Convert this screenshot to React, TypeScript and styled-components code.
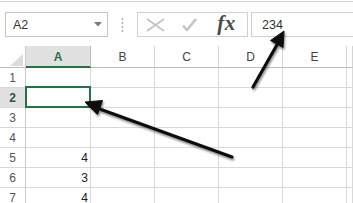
import React from "react";
import styled, { createGlobalStyle } from "styled-components";

const Global = createGlobalStyle`
  html, body { margin: 0; padding: 0; background: #fff; }
  body { width: 353px; height: 203px; overflow: hidden; font-family: "Liberation Sans", Arial, sans-serif; }
  * { box-sizing: border-box; }
`;

const Page = styled.div`
  position: relative;
  width: 353px;
  height: 203px;
  overflow: hidden;
  background: #fff;
`;

const FormulaBar = styled.div`
  display: flex;
  align-items: flex-start;
  margin-top: 1px;
  border-top: 1px solid #d6d6d6;
  padding: 10px 0 8px 5px;
  height: 45px;
`;

const NameBox = styled.div`
  position: relative;
  width: 103px;
  height: 25px;
  border: 1px solid #c6c6c6;
  display: flex;
  align-items: center;
  padding-left: 7px;
  font-size: 12.5px;
  color: #333;
  flex-shrink: 0;
`;

const Caret = styled.svg`
  position: absolute;
  right: 5px;
  top: 9px;
`;

const Grip = styled.svg`
  margin: 6px 13px 0 13px;
  flex-shrink: 0;
`;

const ButtonGroup = styled.div`
  width: 111px;
  height: 25px;
  border: 1px solid #cfcfcf;
  display: flex;
  align-items: center;
  flex-shrink: 0;
`;

const IconSlot = styled.div<{ $w: number }>`
  width: ${(p) => p.$w}px;
  height: 100%;
  display: flex;
  align-items: center;
  justify-content: center;
`;

const Fx = styled.span`
  font-family: "Liberation Serif", "Times New Roman", serif;
  font-style: italic;
  font-weight: 700;
  font-size: 21px;
  color: #4a4a4a;
  line-height: 1;
  margin-top: -2px;
  letter-spacing: 0.5px;
`;

const FormulaInput = styled.div`
  margin-left: 3px;
  flex: 1;
  height: 25px;
  border: 1px solid #cfcfcf;
  border-right: none;
  display: flex;
  align-items: center;
  padding-left: 10px;
  font-size: 12.5px;
  color: #333;
`;

const Grid = styled.div`
  display: grid;
  grid-template-columns: 26px 65px repeat(4, 64px) 1fr;
  grid-template-rows: 22px repeat(7, 20px);
`;

const Corner = styled.div`
  position: relative;
  border-right: 1px solid #c8c8c8;
  border-bottom: 1px solid #bdbdbd;
`;

const CornerTri = styled.svg`
  position: absolute;
  right: 2px;
  bottom: 1px;
`;

const ColHead = styled.div<{ $sel?: boolean }>`
  display: flex;
  align-items: center;
  justify-content: center;
  font-size: 12px;
  color: ${(p) => (p.$sel ? "#217346" : "#444")};
  font-weight: ${(p) => (p.$sel ? 700 : 400)};
  background: ${(p) => (p.$sel ? "#e1e1e1" : "#fff")};
  border-right: 1px solid ${(p) => (p.$sel ? "#bdbdbd" : "#d4d4d4")};
  border-bottom: ${(p) => (p.$sel ? "2px solid #217346" : "1px solid #bdbdbd")};
  padding-top: ${(p) => (p.$sel ? "1px" : "0")};
`;

const RowHead = styled.div<{ $sel?: boolean }>`
  display: flex;
  align-items: center;
  justify-content: center;
  font-size: 12px;
  color: ${(p) => (p.$sel ? "#2c5a3c" : "#555")};
  font-weight: ${(p) => (p.$sel ? 700 : 400)};
  background: ${(p) => (p.$sel ? "#e1e1e1" : "#fff")};
  border-right: 1px solid #c8c8c8;
  border-bottom: 1px solid #d8d8d8;
`;

const Cell = styled.div<{ $sel?: boolean }>`
  position: relative;
  display: flex;
  align-items: center;
  justify-content: flex-end;
  padding-right: 2px;
  font-size: 12px;
  color: #222;
  border-right: 1px solid #d9d9d9;
  border-bottom: 1px solid #d9d9d9;
  ${(p) =>
    p.$sel
      ? `&::after {
    content: "";
    position: absolute;
    top: -2px; left: -1px; right: -1px; bottom: -1px;
    border: 2px solid #217346;
  }`
      : ""}
`;

const Overlay = styled.svg`
  position: absolute;
  left: 0;
  top: 0;
  pointer-events: none;
`;

const cols = ["A", "B", "C", "D", "E", ""];
const values: Record<number, string> = { 5: "4", 6: "3", 7: "4" };

export default function App() {
  return (
    <Page>
      <Global />
      <FormulaBar>
        <NameBox>
          A2
          <Caret width="8" height="5" viewBox="0 0 8 5">
            <path d="M0 0 L8 0 L4 4.5 Z" fill="#7a7a7a" />
          </Caret>
        </NameBox>
        <Grip width="3" height="14" viewBox="0 0 3 14">
          {[1, 5, 9, 13].map((y) => (
            <circle key={y} cx="1.5" cy={y} r="0.9" fill="#a8a8a8" />
          ))}
        </Grip>
        <ButtonGroup>
          <IconSlot $w={35}>
            <svg width="19" height="14" viewBox="0 0 19 14">
              <path d="M1 1 L18 13 M18 1 L1 13" stroke="#c4c4c4" strokeWidth="1.7" fill="none" />
            </svg>
          </IconSlot>
          <IconSlot $w={33}>
            <svg width="15" height="13" viewBox="0 0 15 13">
              <path d="M1 7.5 L5 12 L14 1" stroke="#c4c4c4" strokeWidth="2.6" fill="none" strokeLinejoin="round" />
            </svg>
          </IconSlot>
          <IconSlot $w={41}>
            <Fx>fx</Fx>
          </IconSlot>
        </ButtonGroup>
        <FormulaInput>234</FormulaInput>
      </FormulaBar>
      <Grid>
        <Corner>
          <CornerTri width="13" height="12" viewBox="0 0 13 12">
            <path d="M13 0 L13 12 L0 12 Z" fill="#dcdcdc" />
          </CornerTri>
        </Corner>
        {cols.map((c, i) => (
          <ColHead key={i} $sel={c === "A"}>
            {c}
          </ColHead>
        ))}
        {[1, 2, 3, 4, 5, 6, 7].map((r) => (
          <React.Fragment key={r}>
            <RowHead $sel={r === 2}>{r}</RowHead>
            {cols.map((c, i) => (
              <Cell key={i} $sel={r === 2 && i === 0}>
                {i === 0 ? values[r] ?? "" : ""}
              </Cell>
            ))}
          </React.Fragment>
        ))}
      </Grid>
      <Overlay width="353" height="203" viewBox="0 0 353 203">
        <defs>
          <filter id="sh" x="-20%" y="-20%" width="140%" height="140%">
            <feDropShadow dx="1" dy="2" stdDeviation="1.2" floodColor="#000" floodOpacity="0.45" />
          </filter>
        </defs>
        <g filter="url(#sh)" fill="#111" stroke="#111">
          <line x1="232" y1="157" x2="97" y2="108" strokeWidth="3.2" strokeLinecap="round" />
          <path d="M85 102 L102.5 100.5 L97.5 114.5 Z" strokeWidth="1" strokeLinejoin="round" />
          <line x1="253" y1="87" x2="278" y2="43" strokeWidth="3.2" strokeLinecap="round" />
          <path d="M284 31 L283 47.5 L270.5 40.5 Z" strokeWidth="1" strokeLinejoin="round" />
        </g>
      </Overlay>
    </Page>
  );
}
